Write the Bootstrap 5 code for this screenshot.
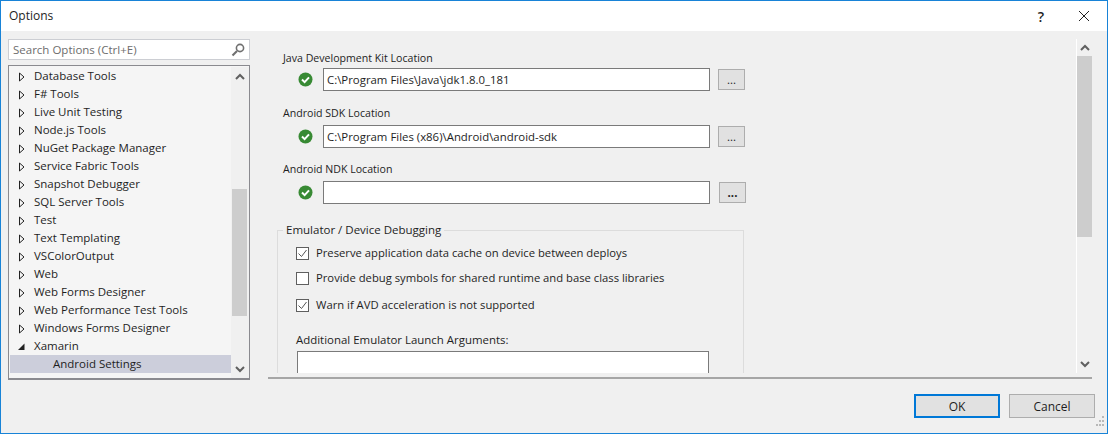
<!DOCTYPE html>
<html lang="en"><head><meta charset="utf-8"><title>Options</title>
<link href="https://cdn.jsdelivr.net/npm/bootstrap@5.3.0/dist/css/bootstrap.min.css" rel="stylesheet">
<style>
html,body{margin:0;height:434px;overflow:hidden;background:#f0f0f0}
body,.dlg input,.dlg button,.dlg legend,.dlg label{font-family:"Open Sans","Noto Sans",sans-serif;font-size:11.5px;color:#1e1e1e}
.dlg{width:1108px;height:434px;border:1px solid #1883d7;background:#f0f0f0}
.ttl{height:30px;background:#fff;padding:0 8px;font-size:12px}
.ttl-q{width:14px;margin-right:30px;font-size:14px;font-weight:600;text-align:center}
.ttl-x{margin-right:9px}
.main-row{height:348px}
.left-col{width:242px;margin-left:7px;padding-top:8px}
.srch{height:21px;background:#fff;border:1px solid #ccced3;padding:0 4px 0 4px;color:#6d6d6d}
.tree{height:315px;margin-top:5px;border:1px solid #8a8a8f;border-bottom-width:2px;background:#f5f5f5;padding:1px 0 0 1px;overflow:hidden}
.tree-list{width:221px;height:311px;overflow:hidden}
.tree-row{height:18px;line-height:18px;white-space:nowrap}
.tree-row.on{background:#cccedb}
.tw{width:24px;padding-left:8px;flex:none}
.tw-none{width:43px;flex:none}
.sb{flex:none;background:#f0f0f0}
.sb-t{width:18px;height:311px;padding:0 2px 0 1px}
.thumb{background:#cdcdcd}
.sb-ic{height:18px}
.t1{height:104px}
.t2{height:127px}
.pane{width:824px;height:340px;margin-left:18px;margin-top:8px;border-bottom:2px solid #a6a6a6;overflow:hidden;align-items:flex-start}
.pane-in{width:808px;height:334px;overflow:hidden;padding:11px 0 0 15px}
.fld-lb{height:16px;line-height:16px;font-size:10.6px}
.fld-row{height:23px;margin-top:4px;margin-bottom:13px}
.fld-row.first{margin-top:2px;margin-bottom:14px}
.fld-row.tight{margin-bottom:18px}
.chk-ic{width:15px;margin-left:15px;margin-right:10px;flex:none}
.dlg .inp{width:387px;height:23px;border:1px solid #7a7a7a;border-radius:0;background:#fff;padding:0 3px;box-shadow:none;font-size:11.4px;min-height:0}
.dlg .dots{width:27px;height:21px;border:1px solid #adadad;border-radius:0;background:#e1e1e1;margin-left:8px;padding:0;line-height:20px;font-size:11.5px}
.dlg .dots.nudge{margin-left:9px;font-weight:700}
.grp{width:467px;height:200px;border:1px solid #dcdcdc;margin:0 0 0 -6px;padding:0 0 0 18px;min-width:0}
.dlg .grp legend{float:none;width:auto;margin:0 0 0 -13px;padding:0 3px;line-height:16px;font-size:11.5px}
.dlg .chk-rw{height:14px;line-height:14px;margin-bottom:11px;margin-top:0;font-size:11.25px}
.dlg .chk-rw.r1{margin-top:8px}
.dlg .chk-rw.r2{margin-bottom:13px}
.dlg .cb{width:13px;height:13px;margin:0 7px 0 0;border:1px solid #5f5f5f;border-radius:0;background-color:#fff;flex:none;padding:0;display:block;box-shadow:none}
.dlg .cb:checked{background-color:#fff;border-color:#5f5f5f;background-size:11px 11px;background-position:center;background-repeat:no-repeat;background-image:url("data:image/svg+xml,%3Csvg xmlns='http://www.w3.org/2000/svg' viewBox='0 0 11 11'%3E%3Cpath d='M1.5 5.5l3 3 5-6.5' fill='none' stroke='%23555' stroke-width='1'/%3E%3C/svg%3E")}
.args-lb{margin-top:20px;height:16px;line-height:16px;font-size:11.45px}
.dlg .args{width:412px;height:40px;margin-left:1px;margin-top:3px;border:1px solid #7a7a7a;background:#fff}
.sb-m{width:16px;height:334px;border-left:1px solid #fff;margin-left:0}
.sb-top{height:17px}
.t3{height:181px}
.foot{height:52px;padding:15px 12px 0 0}
.dlg .act{width:86px;height:24px;border:1px solid #adadad;border-radius:0;background:#e1e1e1;padding:0;font-size:12px;line-height:21px;margin-left:9px}
.dlg .act.def{border:2px solid #0078d7;line-height:19px}
.grip{margin:-15px 3px 0 auto;width:8px;height:10px}
</style></head><body>
<div class="dlg d-flex flex-column">
  <div class="ttl d-flex align-items-center">
    <span class="flex-grow-1">Options</span>
    <span class="ttl-q">?</span>
    <svg class="ttl-x" width="12" height="12" viewBox="0 0 12 12"><path d="M1 1l10 10M11 1L1 11" stroke="#222" fill="none"/></svg>
  </div>
  <div class="main-row d-flex">
    <div class="left-col">
      <div class="srch d-flex align-items-center justify-content-between"><span>Search Options (Ctrl+E)</span>
        <svg width="14" height="14" viewBox="0 0 14 14"><circle cx="9" cy="5" r="3.6" fill="none" stroke="#707070" stroke-width="1.6"/><path d="M6 8l-4.5 4.5" stroke="#707070" stroke-width="2.2"/></svg></div>
      <div class="tree d-flex">
        <div class="tree-list" id="tl">
          <div class="tree-row d-flex"><span class="tw"><svg width="8" height="10" viewBox="0 0 8 10"><path d="M1.5 1v8l4.5-4z" fill="#f5f5f5" stroke="#222"/></svg></span>Database Tools</div>
          <div class="tree-row d-flex"><span class="tw"><svg width="8" height="10" viewBox="0 0 8 10"><path d="M1.5 1v8l4.5-4z" fill="#f5f5f5" stroke="#222"/></svg></span>F# Tools</div>
          <div class="tree-row d-flex"><span class="tw"><svg width="8" height="10" viewBox="0 0 8 10"><path d="M1.5 1v8l4.5-4z" fill="#f5f5f5" stroke="#222"/></svg></span>Live Unit Testing</div>
          <div class="tree-row d-flex"><span class="tw"><svg width="8" height="10" viewBox="0 0 8 10"><path d="M1.5 1v8l4.5-4z" fill="#f5f5f5" stroke="#222"/></svg></span>Node.js Tools</div>
          <div class="tree-row d-flex"><span class="tw"><svg width="8" height="10" viewBox="0 0 8 10"><path d="M1.5 1v8l4.5-4z" fill="#f5f5f5" stroke="#222"/></svg></span>NuGet Package Manager</div>
          <div class="tree-row d-flex"><span class="tw"><svg width="8" height="10" viewBox="0 0 8 10"><path d="M1.5 1v8l4.5-4z" fill="#f5f5f5" stroke="#222"/></svg></span>Service Fabric Tools</div>
          <div class="tree-row d-flex"><span class="tw"><svg width="8" height="10" viewBox="0 0 8 10"><path d="M1.5 1v8l4.5-4z" fill="#f5f5f5" stroke="#222"/></svg></span>Snapshot Debugger</div>
          <div class="tree-row d-flex"><span class="tw"><svg width="8" height="10" viewBox="0 0 8 10"><path d="M1.5 1v8l4.5-4z" fill="#f5f5f5" stroke="#222"/></svg></span>SQL Server Tools</div>
          <div class="tree-row d-flex"><span class="tw"><svg width="8" height="10" viewBox="0 0 8 10"><path d="M1.5 1v8l4.5-4z" fill="#f5f5f5" stroke="#222"/></svg></span>Test</div>
          <div class="tree-row d-flex"><span class="tw"><svg width="8" height="10" viewBox="0 0 8 10"><path d="M1.5 1v8l4.5-4z" fill="#f5f5f5" stroke="#222"/></svg></span>Text Templating</div>
          <div class="tree-row d-flex"><span class="tw"><svg width="8" height="10" viewBox="0 0 8 10"><path d="M1.5 1v8l4.5-4z" fill="#f5f5f5" stroke="#222"/></svg></span>VSColorOutput</div>
          <div class="tree-row d-flex"><span class="tw"><svg width="8" height="10" viewBox="0 0 8 10"><path d="M1.5 1v8l4.5-4z" fill="#f5f5f5" stroke="#222"/></svg></span>Web</div>
          <div class="tree-row d-flex"><span class="tw"><svg width="8" height="10" viewBox="0 0 8 10"><path d="M1.5 1v8l4.5-4z" fill="#f5f5f5" stroke="#222"/></svg></span>Web Forms Designer</div>
          <div class="tree-row d-flex"><span class="tw"><svg width="8" height="10" viewBox="0 0 8 10"><path d="M1.5 1v8l4.5-4z" fill="#f5f5f5" stroke="#222"/></svg></span>Web Performance Test Tools</div>
          <div class="tree-row d-flex"><span class="tw"><svg width="8" height="10" viewBox="0 0 8 10"><path d="M1.5 1v8l4.5-4z" fill="#f5f5f5" stroke="#222"/></svg></span>Windows Forms Designer</div>
          <div class="tree-row d-flex"><span class="tw"><svg width="8" height="10" viewBox="0 0 8 10"><path d="M6.5 1.5v6.5H0z" fill="#222"/></svg></span>Xamarin</div>
          <div class="tree-row on d-flex"><span class="tw-none"></span>Android Settings</div>
          <div class="tree-row d-flex"><span class="tw-none"></span>Android UI Designer</div>
        </div>
        <div class="sb sb-t d-flex flex-column">
          <div class="sb-ic d-flex align-items-center justify-content-center"><svg width="10" height="7" viewBox="0 0 10 7"><path d="M1 6l4-4 4 4" fill="none" stroke="#606060" stroke-width="2"/></svg></div>
          <div class="t1"></div><div class="thumb t2"></div><div class="flex-grow-1"></div>
          <div class="sb-ic d-flex align-items-center justify-content-center"><svg width="10" height="7" viewBox="0 0 10 7"><path d="M1 1l4 4 4-4" fill="none" stroke="#606060" stroke-width="2"/></svg></div>
        </div>
      </div>
    </div>
    <div class="pane d-flex">
      <div class="pane-in">
        <div class="fld-lb">Java Development Kit Location</div>
        <div class="fld-row first d-flex align-items-center">
          <svg class="chk-ic" width="15" height="15" viewBox="0 0 15 15"><circle cx="7.5" cy="7.5" r="7" fill="#388a34"/><path d="M4 7.5l2.6 2.6L11 5.4" fill="none" stroke="#fff" stroke-width="2"/></svg>
          <input class="inp form-control" value="C:\Program Files\Java\jdk1.8.0_181" readonly>
          <button class="btn dots">...</button>
        </div>
        <div class="fld-lb">Android SDK Location</div>
        <div class="fld-row d-flex align-items-center">
          <svg class="chk-ic" width="15" height="15" viewBox="0 0 15 15"><circle cx="7.5" cy="7.5" r="7" fill="#388a34"/><path d="M4 7.5l2.6 2.6L11 5.4" fill="none" stroke="#fff" stroke-width="2"/></svg>
          <input class="inp form-control" value="C:\Program Files (x86)\Android\android-sdk" readonly>
          <button class="btn dots">...</button>
        </div>
        <div class="fld-lb">Android NDK Location</div>
        <div class="fld-row tight d-flex align-items-center">
          <svg class="chk-ic" width="15" height="15" viewBox="0 0 15 15"><circle cx="7.5" cy="7.5" r="7" fill="#388a34"/><path d="M4 7.5l2.6 2.6L11 5.4" fill="none" stroke="#fff" stroke-width="2"/></svg>
          <input class="inp form-control" value="" readonly>
          <button class="btn dots nudge">...</button>
        </div>
        <fieldset class="grp">
          <legend>Emulator / Device Debugging</legend>
          <label class="chk-rw r1 d-flex align-items-center"><input class="cb form-check-input" type="checkbox" checked>Preserve application data cache on device between deploys</label>
          <label class="chk-rw r2 d-flex align-items-center"><input class="cb form-check-input" type="checkbox">Provide debug symbols for shared runtime and base class libraries</label>
          <label class="chk-rw d-flex align-items-center"><input class="cb form-check-input" type="checkbox" checked>Warn if AVD acceleration is not supported</label>
          <div class="args-lb">Additional Emulator Launch Arguments:</div>
          <div class="args"></div>
        </fieldset>
      </div>
      <div class="sb sb-m d-flex flex-column">
        <div class="sb-ic sb-top d-flex align-items-center justify-content-center"><svg width="10" height="7" viewBox="0 0 10 7"><path d="M1 6l4-4 4 4" fill="none" stroke="#606060" stroke-width="2"/></svg></div>
        <div class="thumb t3"></div><div class="flex-grow-1"></div>
        <div class="sb-ic d-flex align-items-center justify-content-center"><svg width="10" height="7" viewBox="0 0 10 7"><path d="M1 1l4 4 4-4" fill="none" stroke="#606060" stroke-width="2"/></svg></div>
      </div>
    </div>
  </div>
  <div class="foot d-flex justify-content-end align-items-start">
    <button class="btn act def">OK</button>
    <button class="btn act">Cancel</button>
  </div>
  <svg class="grip" viewBox="0 0 8 10"><path d="M6 0h2v2H6zM3 4h2v2H3zM6 4h2v2H6zM0 8h2v2H0zM3 8h2v2H3zM6 8h2v2H6z" fill="#b8b8b8"/></svg>
</div>
</body></html>
